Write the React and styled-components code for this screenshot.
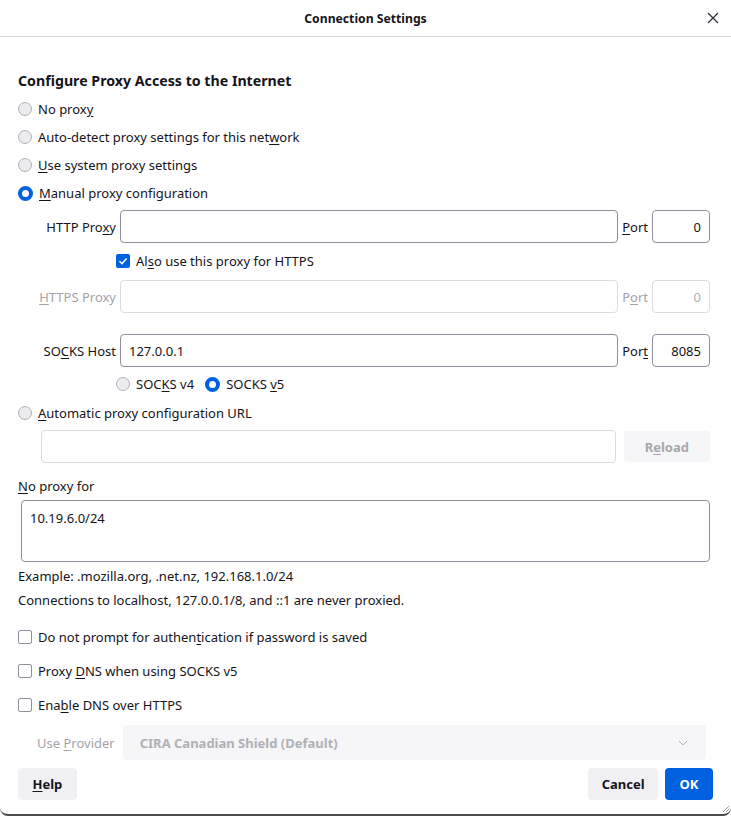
import React from 'react'
import styled, { createGlobalStyle, css } from 'styled-components'

const Global = createGlobalStyle`
  html, body {
    margin: 0;
    padding: 0;
    background: #ffffff;
  }
  body {
    font-family: "Noto Sans", "DejaVu Sans", sans-serif;
    font-size: 13px;
    color: #15141a;
  }
  u {
    text-underline-offset: 2px;
  }
`

const Window = styled.div`
  position: relative;
  width: 731px;
  height: 816px;
  box-sizing: border-box;
  background: #fff;
  border-radius: 8px;
  border-bottom: 2px solid #4a4a4f;
  display: flex;
  flex-direction: column;
  overflow: hidden;
`

const TitleBar = styled.div`
  height: 36px;
  flex: none;
  display: flex;
  align-items: center;
  justify-content: center;
  border-bottom: 1px solid #d4d4d8;
  position: relative;
  font-weight: 700;
  font-size: 12.2px;
`

const CloseBtn = styled.span`
  position: absolute;
  right: 12px;
  top: 12px;
  width: 12px;
  height: 12px;
  display: flex;
`

const Content = styled.div`
  flex: 1;
  padding: 32px 21px 0 18px;
  display: flex;
  flex-direction: column;
`

const Heading = styled.h1`
  margin: 1px 0 0;
  font-size: 14.2px;
  font-weight: 700;
  line-height: 22px;
`

const OptionRow = styled.label`
  display: flex;
  align-items: center;
  gap: 6px;
  height: 28px;
  margin-left: ${p => p.$indent || 0}px;
  margin-top: ${p => p.$mt || 0}px;
  color: ${p => (p.$disabled ? '#a3a3a8' : '#15141a')};
  white-space: nowrap;
`

const Radio = styled.span`
  box-sizing: border-box;
  width: 14px;
  height: 14px;
  border-radius: 50%;
  flex: none;
  ${p =>
    p.$checked
      ? css`
          border: 4px solid #0061e0;
          background: #fff;
          width: 15px;
          height: 15px;
        `
      : css`
          border: 1px solid #b1b1b9;
          background: #ececef;
        `}
`

const Box = styled.span`
  box-sizing: border-box;
  width: 14px;
  height: 14px;
  border-radius: 2px;
  flex: none;
  display: flex;
  align-items: center;
  justify-content: center;
  ${p =>
    p.$checked
      ? css`
          background: #0061e0;
        `
      : css`
          border: 1px solid #8f8f9d;
          background: #fff;
        `}
`

const ProxyGrid = styled.div`
  display: grid;
  grid-template-columns: 98px 1fr auto 58px;
  column-gap: 4px;
  align-items: center;
  margin-top: ${p => p.$mt || 0}px;
`

const FieldLabel = styled.span`
  text-align: right;
  white-space: nowrap;
  color: ${p => (p.$disabled ? '#a3a3a8' : '#15141a')};
`

const TextBox = styled.div`
  box-sizing: border-box;
  height: 33px;
  border: 1px solid ${p => (p.$disabled ? '#dcdce0' : '#8f8f9d')};
  border-radius: 4px;
  padding: 0 8px;
  display: flex;
  align-items: center;
  justify-content: ${p => (p.$right ? 'flex-end' : 'flex-start')};
  color: ${p => (p.$disabled ? '#b0b0b5' : '#15141a')};
  background: #fff;
`

const SocksRow = styled.div`
  display: flex;
  gap: 11px;
  margin-left: 98px;
  height: 28px;
  margin-top: 3px;
`

const UrlRow = styled.div`
  display: flex;
  align-items: center;
  gap: 8px;
  margin-left: 23px;
  margin-top: 3px;
`

const UrlInput = styled(TextBox)`
  flex: 1;
  border-color: #dcdce0;
`

const Button = styled.button`
  font-family: inherit;
  font-size: 13px;
  font-weight: 700;
  border: none;
  border-radius: 4px;
  height: 32px;
  padding: 0 ${p => p.$px || 14}px;
  background: ${p => (p.$primary ? '#0061e0' : p.$disabled ? '#f6f6f8' : '#f0f0f4')};
  color: ${p => (p.$primary ? '#fff' : p.$disabled ? '#a8a8ae' : '#15141a')};
  cursor: default;
`

const Label = styled.div`
  line-height: 20px;
  margin-top: ${p => p.$mt || 0}px;
`

const TextArea = styled.div`
  box-sizing: border-box;
  height: 62px;
  margin: 4px 0 0 3px;
  border: 1px solid #8f8f9d;
  border-radius: 4px;
  padding: 8px 8px;
  line-height: 18px;
`

const Note = styled.div`
  line-height: 24px;
  margin-top: ${p => p.$mt || 0}px;
`

const CheckRow = styled.label`
  display: flex;
  align-items: center;
  gap: 6px;
  height: 34px;
  margin-top: ${p => p.$mt || 0}px;
`

const ProviderRow = styled.div`
  display: flex;
  align-items: center;
  gap: 8px;
  margin: 3px 4px 0 19px;
  color: #a3a3a8;
`

const Select = styled.div`
  flex: 1;
  height: 35px;
  border-radius: 4px;
  background: #f6f6f8;
  display: flex;
  align-items: center;
  justify-content: space-between;
  padding: 0 18px 0 17px;
  font-weight: 700;
  color: #b0b0b5;
`

const Footer = styled.div`
  display: flex;
  align-items: center;
  gap: 7px;
  padding: 8px 18px 14px 18px;
`

const Spacer = styled.div`
  flex: 1;
`

const Grip = styled.svg`
  position: absolute;
  right: 1px;
  bottom: 1px;
`

const RadioOption = ({ checked, children, ...rest }) => (
  <OptionRow {...rest}>
    <Radio $checked={checked} />
    <span>{children}</span>
  </OptionRow>
)

const CheckOption = ({ checked, children, ...rest }) => (
  <CheckRow {...rest}>
    <Box $checked={checked}>
      {checked && (
        <svg width="10" height="10" viewBox="0 0 10 10">
          <path d="M1.5 5.2 L4 7.6 L8.6 2.4" stroke="#fff" strokeWidth="1.5" fill="none" />
        </svg>
      )}
    </Box>
    <span>{children}</span>
  </CheckRow>
)

export default function App() {
  return (
    <>
      <Global />
      <Window>
        <TitleBar>
          Connection Settings
          <CloseBtn>
            <svg width="12" height="12" viewBox="0 0 12 12">
              <path d="M1 1 L11 11 M11 1 L1 11" stroke="#2b2a33" strokeWidth="1.2" />
            </svg>
          </CloseBtn>
        </TitleBar>
        <Content>
          <Heading>Configure Proxy Access to the Internet</Heading>
          <RadioOption $mt={3}>No prox<u>y</u></RadioOption>
          <RadioOption>Auto-detect proxy settings for this net<u>w</u>ork</RadioOption>
          <RadioOption><u>U</u>se system proxy settings</RadioOption>
          <RadioOption checked><u>M</u>anual proxy configuration</RadioOption>

          <ProxyGrid $mt={3}>
            <FieldLabel>HTTP Pro<u>x</u>y</FieldLabel>
            <TextBox />
            <FieldLabel><u>P</u>ort</FieldLabel>
            <TextBox $right>0</TextBox>
          </ProxyGrid>
          <CheckOption checked $mt={4} style={{ marginLeft: 98, height: 28 }}>
            Al<u>s</u>o use this proxy for HTTPS
          </CheckOption>
          <ProxyGrid $mt={5}>
            <FieldLabel $disabled><u>H</u>TTPS Proxy</FieldLabel>
            <TextBox $disabled />
            <FieldLabel $disabled>P<u>o</u>rt</FieldLabel>
            <TextBox $disabled $right>0</TextBox>
          </ProxyGrid>
          <ProxyGrid $mt={21}>
            <FieldLabel>SO<u>C</u>KS Host</FieldLabel>
            <TextBox>127.0.0.1</TextBox>
            <FieldLabel>Por<u>t</u></FieldLabel>
            <TextBox $right>8085</TextBox>
          </ProxyGrid>
          <SocksRow>
            <RadioOption>SOC<u>K</u>S v4</RadioOption>
            <RadioOption checked>SOCKS <u>v</u>5</RadioOption>
          </SocksRow>
          <RadioOption $mt={1}><u>A</u>utomatic proxy configuration URL</RadioOption>
          <UrlRow>
            <UrlInput />
            <Button $disabled $px={21} style={{ height: 31 }}>R<u>e</u>load</Button>
          </UrlRow>

          <Label $mt={13}><u>N</u>o proxy for</Label>
          <TextArea>10.19.6.0/24</TextArea>
          <Note $mt={2}>Example: .mozilla.org, .net.nz, 192.168.1.0/24</Note>
          <Note>Connections to localhost, 127.0.0.1/8, and ::1 are never proxied.</Note>

          <CheckOption $mt={8}>Do not prompt for authen<u>t</u>ication if password is saved</CheckOption>
          <CheckOption>Proxy <u>D</u>NS when using SOCKS v5</CheckOption>
          <CheckOption>Ena<u>b</u>le DNS over HTTPS</CheckOption>
          <ProviderRow>
            <span>Use <u>P</u>rovider</span>
            <Select>
              <span>CIRA Canadian Shield (Default)</span>
              <svg width="10" height="6" viewBox="0 0 10 6">
                <path d="M1 1 L5 5 L9 1" stroke="#b0b0b5" fill="none" strokeWidth="1" />
              </svg>
            </Select>
          </ProviderRow>
        </Content>
        <Footer>
          <Button $px={14.5}><u>H</u>elp</Button>
          <Spacer />
          <Button $px={13.5}>Cancel</Button>
          <Button $primary $px={14.5}>OK</Button>
        </Footer>
        <Grip width="8" height="8" viewBox="0 0 8 8">
          <path d="M7 1 L1 7 M7 4 L4 7" stroke="#9a9a9f" strokeWidth="1" />
        </Grip>
      </Window>
    </>
  )
}
